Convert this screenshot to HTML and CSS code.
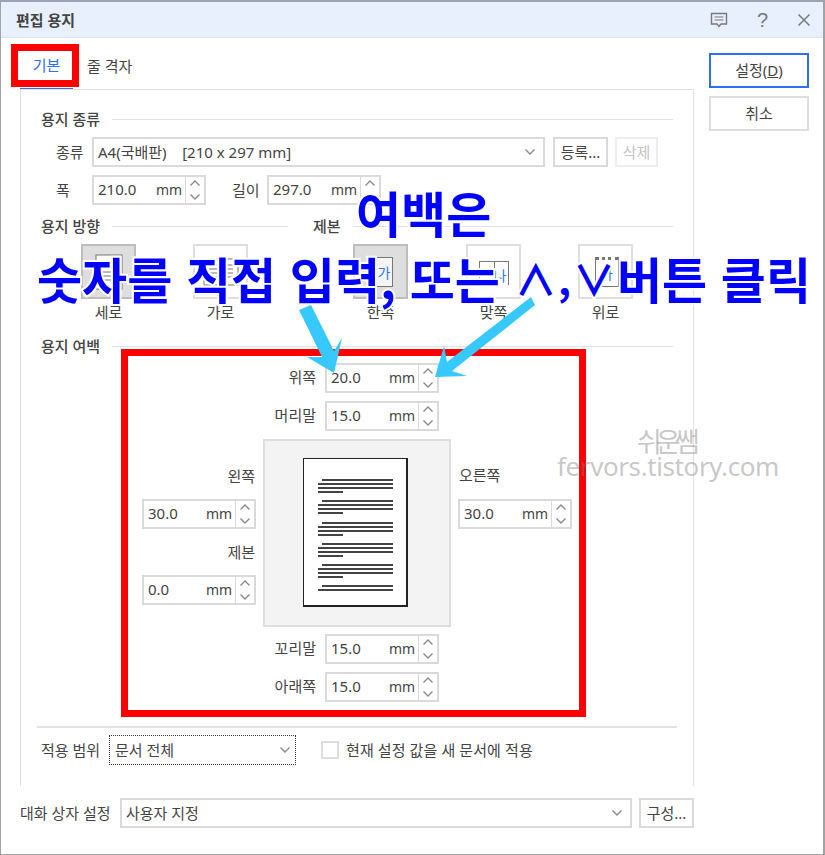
FILE: index.html
```html
<!DOCTYPE html>
<html lang="ko">
<head>
<meta charset="utf-8">
<title>편집 용지</title>
<link rel="stylesheet" href="styles.css">
</head>
<body>
<svg class="defs" width="0" height="0" aria-hidden="true">
  <symbol id="up" viewBox="0 0 12 8"><path d="M1.500 6.500 6 2l4.500 4.500" fill="none" stroke="#8a8a8a" stroke-width="1.400"/></symbol>
  <symbol id="down" viewBox="0 0 12 8"><path d="M1.500 1.500 6 6l4.500-4.500" fill="none" stroke="#8a8a8a" stroke-width="1.400"/></symbol>
</svg>
<div class="dialog">
  <header class="titlebar">
    <span class="title">편집 용지</span>
    <div class="title-icons">
      <svg width="18" height="16" viewBox="0 0 18 16"><path d="M1.500 1.500h15v10.500h-5.500l-2 2.500-2-2.500H1.500z" fill="none" stroke="#77797d" stroke-width="1.400"/><path d="M4.500 5h9M4.500 8h9" stroke="#77797d" stroke-width="1.200"/></svg>
      <span class="help">?</span>
      <svg width="14" height="14" viewBox="0 0 14 14"><path d="M1.500 1.500l11 11M12.500 1.500l-11 11" stroke="#77797d" stroke-width="1.500"/></svg>
    </div>
  </header>

  <div class="content">
    <div class="left">
      <nav class="tabs">
        <span class="tab active">기본</span>
        <span class="tab">줄 격자</span>
      </nav>
      <main class="panel">
        <div class="sec-head sec-first"><span>용지 종류</span><i></i></div>
        <div class="row row-type">
          <label class="lab">종류</label>
          <div class="combo combo-type"><span>A4(국배판)&nbsp;&nbsp;&nbsp; [210 x 297 mm]</span><svg class="caret"><use href="#down"/></svg></div>
          <button class="btn btn-reg">등록...</button>
          <button class="btn btn-del">삭제</button>
        </div>
        <div class="row row-size">
          <label class="lab">폭</label>
          <div class="spin"><span class="val">210.0</span><span class="unit">mm</span><span class="arrows"><svg><use href="#up"/></svg><svg><use href="#down"/></svg></span></div>
          <label class="lab lab-len">길이</label>
          <div class="spin"><span class="val">297.0</span><span class="unit">mm</span><span class="arrows"><svg><use href="#up"/></svg><svg><use href="#down"/></svg></span></div>
        </div>

        <div class="sec-double">
          <div class="sec-head sec-orient"><span>용지 방향</span><i></i></div>
          <div class="sec-head sec-bind"><span>제본</span><i></i></div>
        </div>
        <div class="options">
          <div class="opt opt-1">
            <div class="opt-box on">
              <svg width="30" height="36" viewBox="0 0 30 36"><rect x="2" y="1" width="26" height="34" fill="#fff" stroke="#777"/><path d="M7 10h16M7 14h16M7 18h16M7 22h16M7 26h10" stroke="#777"/></svg>
            </div>
            <span>세로</span>
          </div>
          <div class="opt opt-2">
            <div class="opt-box">
              <svg width="36" height="30" viewBox="0 0 36 30"><rect x="1" y="2" width="34" height="26" fill="#fff" stroke="#777"/><path d="M6 8h8M6 12h8M6 16h8M6 20h8M22 8h8M22 12h8M22 16h8M22 20h8" stroke="#777"/><path d="M18 3v24" stroke="#777" stroke-dasharray="2 2"/></svg>
            </div>
            <span>가로</span>
          </div>
          <div class="opt opt-3">
            <div class="opt-box on">
              <div class="ic-single"><b class="ko-blue">가</b></div>
            </div>
            <span>한쪽</span>
          </div>
          <div class="opt opt-4">
            <div class="opt-box">
              <div class="ic-facing"><em class="notch"></em><b class="ko-blue">나</b></div>
            </div>
            <span>맞쪽</span>
          </div>
          <div class="opt opt-5">
            <div class="opt-box">
              <div class="ic-top"><b class="ko-blue">가</b></div>
            </div>
            <span>위로</span>
          </div>
        </div>

        <div class="sec-head sec-margin"><span>용지 여백</span><i></i></div>
        <div class="margins">
          <div class="mrow"><label>위쪽</label><div class="spin"><span class="val">20.0</span><span class="unit">mm</span><span class="arrows"><svg><use href="#up"/></svg><svg><use href="#down"/></svg></span></div></div>
          <div class="mrow"><label>머리말</label><div class="spin"><span class="val">15.0</span><span class="unit">mm</span><span class="arrows"><svg><use href="#up"/></svg><svg><use href="#down"/></svg></span></div></div>
          <div class="mid">
            <div class="side side-left">
              <label>왼쪽</label>
              <div class="spin"><span class="val">30.0</span><span class="unit">mm</span><span class="arrows"><svg><use href="#up"/></svg><svg><use href="#down"/></svg></span></div>
              <label>제본</label>
              <div class="spin"><span class="val">0.0</span><span class="unit">mm</span><span class="arrows"><svg><use href="#up"/></svg><svg><use href="#down"/></svg></span></div>
            </div>
            <div class="preview">
              <div class="page">
                <div class="para"><i class="l1"></i><i></i><i></i><i class="l4"></i></div>
                <div class="para"><i class="l1"></i><i></i><i></i><i class="l4"></i></div>
                <div class="para"><i class="l1"></i><i></i><i></i><i class="l4"></i></div>
                <div class="para"><i class="l1"></i><i></i><i></i><i class="l4"></i></div>
                <div class="para"><i class="l1"></i><i></i><i></i><i class="l4"></i></div>
                <div class="para"><i class="l1"></i><i></i></div>
              </div>
            </div>
            <div class="side side-right">
              <label>오른쪽</label>
              <div class="spin"><span class="val">30.0</span><span class="unit">mm</span><span class="arrows"><svg><use href="#up"/></svg><svg><use href="#down"/></svg></span></div>
            </div>
          </div>
          <div class="mrow mrow-foot"><label>꼬리말</label><div class="spin"><span class="val">15.0</span><span class="unit">mm</span><span class="arrows"><svg><use href="#up"/></svg><svg><use href="#down"/></svg></span></div></div>
          <div class="mrow"><label>아래쪽</label><div class="spin"><span class="val">15.0</span><span class="unit">mm</span><span class="arrows"><svg><use href="#up"/></svg><svg><use href="#down"/></svg></span></div></div>
        </div>

        <div class="sep"></div>
        <div class="row row-apply">
          <label class="lab-apply">적용 범위</label>
          <div class="combo combo-apply"><span>문서 전체</span><svg class="caret"><use href="#down"/></svg></div>
          <span class="check"></span>
          <span class="check-label">현재 설정 값을 새 문서에 적용</span>
        </div>
      </main>
      <div class="row row-dialog">
        <label class="lab-dialog">대화 상자 설정</label>
        <div class="combo combo-dialog"><span>사용자 지정</span><svg class="caret"><use href="#down"/></svg></div>
        <button class="btn btn-conf">구성...</button>
      </div>
    </div>

    <aside class="right">
      <button class="cmd cmd-ok">설정(<u>D</u>)</button>
      <button class="cmd">취소</button>
    </aside>
  </div>

  <!-- screenshot annotations laid over the dialog -->
  <div class="mark mark-tab"></div>
  <div class="mark mark-area"></div>
  <div class="note note-1">여백은</div>
  <div class="note note-2"><span>숫자를 직접 입력, 또는</span><span class="chev">∧</span><span class="comma">,</span><span class="chev chev-v">∨</span><span class="note-end">버튼 클릭</span></div>
  <svg class="arrows-layer" width="825" height="855" viewBox="0 0 825 855">
    <polygon points="299,310 311,305 334,351 342,338 334,373 307,357 322,357" fill="#36c8ff"/>
    <polygon points="531,297 535,305 452,371 467,376 435,377 444,346 447,362" fill="#36c8ff"/>
  </svg>
  <div class="wm wm-1">쉬운쌤</div>
  <div class="wm wm-2">fervors.tistory.com</div>
</div>
</body>
</html>
```

FILE: styles.css
```css
* { box-sizing: border-box; }
html, body { margin: 0; padding: 0; background: #fff; }
body {
  font-family: "Noto Sans", "Noto Sans CJK KR", sans-serif;
  font-size: 15px;
  color: #444;
  width: 825px;
  height: 855px;
  overflow: hidden;
}
.defs { position: absolute; }
.dialog {
  position: relative;
  width: 825px;
  height: 855px;
  border: 2px solid #a2a2a2;
  border-top-color: #9aa3b5;
  border-bottom-width: 1px;
  border-left-width: 1px;
  background: #fff;
  display: flex;
  flex-direction: column;
}
.titlebar {
  height: 36px;
  background: #e8effd;
  border-bottom: 1px solid #dbe4f6;
  display: flex;
  align-items: center;
  justify-content: space-between;
  padding: 0 12px 0 15px;
  flex: none;
}
.title { font-size: 15px; font-weight: 700; color: #444; }
.title-icons { display: flex; align-items: center; gap: 29px; }
.help { font-family: "Liberation Sans", sans-serif; font-size: 20px; color: #77797d; line-height: 20px; }

.content { display: flex; gap: 15px; padding-left: 19px; flex: 1; }
.left { width: 674px; flex: none; display: flex; flex-direction: column; }
.tabs { height: 51px; display: flex; align-items: center; flex: none; }
.tab { padding-top: 3px; color: #444; }
.tab.active {
  width: 53px;
  align-self: stretch;
  display: flex;
  align-items: center;
  justify-content: center;
  color: #2d6ff0;
  border-bottom: 2px solid #2d6ff0;
  margin-bottom: -1px;
  margin-right: 14px;
}
.panel {
  height: 697px;
  flex: none;
  border: 1px solid #e2e2e2;
  border-bottom: 0;
  padding: 19px 20px 0 20px;
}
.sec-head { display: flex; align-items: center; height: 20px; gap: 12px; }
.sec-head span { font-weight: 500; color: #444; line-height: 20px; margin-top: -1px; }
.sec-head i { flex: 1; height: 1px; background: #e2e2e2; }
.row { display: flex; align-items: center; }
.row label { margin-top: -2px; }
.lab { width: 36px; }
.row-type { margin-top: 8px; padding-left: 15px; height: 30px; }
.row-size { margin-top: 8px; padding-left: 15px; height: 30px; }
.lab-len { margin-left: 26px; width: 35px; }

.combo {
  height: 30px;
  border: 2px solid #dadada;
  display: flex;
  align-items: center;
  justify-content: space-between;
  padding: 0 7px 2px 4px;
  font-size: 15px;
  background: #fff;
}
.caret { width: 12px; height: 8px; flex: none; margin-top: 2px; }
.combo-type { width: 453px; margin-right: 8px; }
.btn {
  height: 30px;
  border: 2px solid #dadada;
  background: #fff;
  font: inherit;
  color: #444;
  padding: 0 0 2px;
}
.btn-reg { width: 55px; margin-right: 7px; }
.btn-del { width: 43px; border-color: #eee; color: #c4c4c4; }

.spin {
  width: 114px;
  height: 30px;
  border: 2px solid #dadada;
  display: flex;
  align-items: center;
  background: #fff;
  flex: none;
}
.val { font-size: 15px; margin-left: 4px; width: 58px; padding-bottom: 2px; }
.unit { font-size: 14px; width: 29px; padding-bottom: 1px; }
.arrows {
  width: 19px;
  height: 26px;
  border-left: 1px solid #dadada;
  display: flex;
  flex-direction: column;
  justify-content: space-between;
  align-items: center;
  padding: 2px 0;
  flex: none;
}
.arrows svg { width: 12px; height: 8px; display: block; }

.sec-double { display: flex; margin-top: 11px; gap: 25px; }
.sec-orient { width: 247px; }
.sec-bind { flex: 1; }
.options { display: flex; margin-top: 8px; padding-left: 40px; height: 77px; }
.opt { display: flex; flex-direction: column; align-items: center; width: 55px; }
.opt span { line-height: 20px; margin-top: 3px; }
.opt-2 { margin-left: 57px; }
.opt-3 { margin-left: 105px; }
.opt-4 { margin-left: 58px; }
.opt-5 { margin-left: 57px; }
.opt-box {
  width: 55px;
  height: 55px;
  border: 2px solid #dedede;
  background: #fff;
  display: flex;
  align-items: center;
  justify-content: center;
  flex: none;
}
.opt-box.on { background: #dedede; border-color: #bdbdbd; }
.ko-blue { color: #2d7bf0; font-weight: 400; font-size: 14px; }
.ic-single {
  width: 16px;
  height: 30px;
  margin-left: 8px;
  background: #f4f4f4;
  border: 1px solid #777;
  border-left: 0;
  display: flex;
  align-items: center;
  justify-content: center;
}
.ic-facing {
  position: relative;
  width: 30px;
  height: 24px;
  margin-top: 3px;
  border: 1px solid #777;
  border-bottom: 0;
  display: flex;
  align-items: flex-end;
  justify-content: flex-end;
  padding-right: 1px;
}
.notch { position: absolute; left: 14px; top: 0; width: 1px; height: 8px; background: #777; }
.ic-top {
  width: 24px;
  height: 30px;
  margin-left: 2px;
  border: 1px solid #777;
  border-top: 3px dotted #777;
  display: flex;
  align-items: center;
  justify-content: center;
}

.sec-margin { margin-top: 15px; }
.margins { margin-top: 7px; margin-left: 101px; width: 430px; display: flex; flex-direction: column; gap: 8px; }
.mrow { width: 297px; display: flex; justify-content: flex-end; align-items: center; gap: 9px; height: 30px; }
.mrow label { margin-top: -3px; }
.mrow-foot { margin-top: -1px; }
.mid { display: flex; gap: 7px; height: 188px; }
.side { width: 114px; display: flex; flex-direction: column; }
.side label { line-height: 20px; }
.side-left { align-items: flex-end; padding-top: 27px; }
.side-left label { margin-right: 1px; }
.side-left .spin { margin: 13px 0; }
.side-right { padding-top: 26px; padding-left: 1px; }
.side-right .spin { margin-top: 14px; margin-left: -1px; }
.preview {
  width: 188px;
  height: 188px;
  background: #f3f3f3;
  border: 2px solid #dedede;
  display: flex;
  align-items: center;
  justify-content: center;
}
.page {
  width: 105px;
  height: 149px;
  margin: 0 3px 1px 0;
  background: #fff;
  border: 1px solid #222;
  border-width: 1px 2px 2px 1px;
  padding: 20px 13px 0 14px;
  display: flex;
  flex-direction: column;
  gap: 7.300px;
}
.para { display: flex; flex-direction: column; gap: 2px; }
.para i { display: block; height: 2px; background: #444; }
.para .l1 { margin-left: 4px; }
.para .l4 { width: 25px; }

.sep { height: 2px; background: #e2e2e2; margin: 24px -4px 0 -4px; }
.row-apply { margin-top: 7px; height: 30px; }
.lab-apply { width: 68px; }
.combo-apply {
  width: 187px;
  border: 1.500px dotted #333;
  padding: 0 4px 2px 5px;
}
.check { width: 18px; height: 18px; border: 2px solid #dedede; margin-left: 25px; flex: none; }
.check-label { margin-left: 7px; margin-top: -2px; letter-spacing: .1px; }
.row-dialog { margin-top: 12px; height: 30px; }
.lab-dialog { width: 100px; }
.combo-dialog { width: 512px; margin-right: 7px; }
.btn-conf { width: 55px; }

.right { width: 100px; padding-top: 15px; display: flex; flex-direction: column; gap: 8px; }
.cmd {
  width: 100px;
  height: 35px;
  border: 2px solid #dedede;
  background: #fff;
  font: inherit;
  color: #444;
  padding: 0 0 2px;
}
.cmd-ok { border-color: #2d6ff0; }

/* annotations */
.mark { position: absolute; border: 7px solid #f00; }
.mark-tab { left: 10px; top: 42px; width: 68px; height: 43px; }
.mark-area { left: 120px; top: 347px; width: 465px; height: 368px; }
.note {
  position: absolute;
  font-family: "Noto Sans CJK KR", sans-serif;
  font-weight: 700;
  color: #00f;
  font-size: 49px;
  line-height: 60px;
  white-space: nowrap;
  -webkit-text-stroke: 4px #fff;
  paint-order: stroke fill;
}
.note-1 { left: 355px; top: 180px; }
.note-2 { left: 36px; top: 246px; display: flex; align-items: center; }
.chev { font-size: 42px; margin-left: 15px; }
.chev-v { margin-left: 0; }
.comma { margin: 0 2px 0 1px; font-size: 40px; }
.note-end { margin-left: 2px; }
.arrows-layer { position: absolute; left: -1px; top: -2px; pointer-events: none; }
.wm {
  position: absolute;
  color: rgba(120, 120, 120, .42);
  white-space: nowrap;
  font-family: "Noto Sans", "Noto Sans CJK KR", sans-serif;
}
.wm-1 { left: 636px; top: 422px; font-size: 27px; line-height: 36px; letter-spacing: -6px; }
.wm-2 { left: 556px; top: 446px; font-size: 26px; line-height: 36px; letter-spacing: -.400px; }
```
